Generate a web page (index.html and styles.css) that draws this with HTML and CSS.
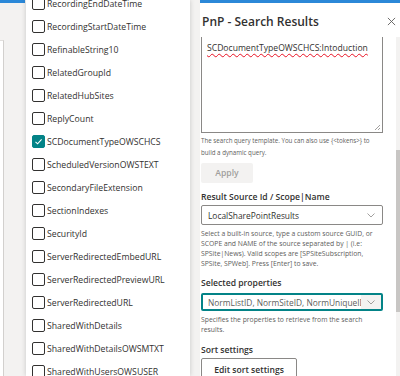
FILE: index.html
```html
<!DOCTYPE html>
<html lang="en">
<head>
    <meta charset="UTF-8">
    <meta name="viewport" content="width=device-width, initial-scale=1.0">
    <title>PnP - Search Results</title>
    <link rel="stylesheet" href="styles.css">
</head>
<body>
    <div class="screen">
        <div class="backdrop-left">
            <div class="top-accent"></div>
            <div class="page-card"></div>
        </div>

        <div class="callout">
            <ul class="options">
                <li class="option"><span class="box"></span>RecordingEndDateTime</li>
                <li class="option"><span class="box"></span>RecordingStartDateTime</li>
                <li class="option"><span class="box"></span>RefinableString10</li>
                <li class="option"><span class="box"></span>RelatedGroupId</li>
                <li class="option"><span class="box"></span>RelatedHubSites</li>
                <li class="option"><span class="box"></span>ReplyCount</li>
                <li class="option">
                    <span class="box checked">
                        <svg viewBox="0 0 13 13" width="13" height="13"><polyline points="3.5,6.8 5.6,8.8 9.6,4.4" fill="none" stroke="#fff" stroke-width="1.1"/></svg>
                    </span>SCDocumentTypeOWSCHCS
                </li>
                <li class="option"><span class="box"></span>ScheduledVersionOWSTEXT</li>
                <li class="option"><span class="box"></span>SecondaryFileExtension</li>
                <li class="option"><span class="box"></span>SectionIndexes</li>
                <li class="option"><span class="box"></span>SecurityId</li>
                <li class="option"><span class="box"></span>ServerRedirectedEmbedURL</li>
                <li class="option"><span class="box"></span>ServerRedirectedPreviewURL</li>
                <li class="option"><span class="box"></span>ServerRedirectedURL</li>
                <li class="option"><span class="box"></span>SharedWithDetails</li>
                <li class="option"><span class="box"></span>SharedWithDetailsOWSMTXT</li>
                <li class="option"><span class="box"></span>SharedWithUsersOWSUSER</li>
            </ul>
        </div>

        <div class="gutter"></div>

        <aside class="panel">
            <div class="panel-head">
                <h2>PnP - Search Results</h2>
                <svg class="close" viewBox="0 0 10 10" width="10" height="10"><path d="M1 1 L9 9 M9 1 L1 9" stroke="#605e5c" stroke-width="1"/></svg>
            </div>

            <div class="panel-scroll">
                <div class="panel-content">
                    <div class="query-box">
                        <span class="query-text">SCDocumentTypeOWSCHCS:Intoduction</span>
                        <svg class="grip" viewBox="0 0 7 7" width="7" height="7"><path d="M6 1 L1 6 M6 4 L4 6" stroke="#8a8886" stroke-width="0.8"/></svg>
                    </div>
                    <p class="help first">The search query template. You can also use {&lt;tokens&gt;} to<br>build a dynamic query.</p>
                    <button class="apply-btn" disabled>Apply</button>

                    <div class="field-label">Result Source Id / Scope|Name</div>
                    <div class="select">
                        <span>LocalSharePointResults</span>
                        <svg viewBox="0 0 8 5" width="8" height="5"><polyline points="0.5,0.5 4,4 7.5,0.5" fill="none" stroke="#8a8886" stroke-width="0.8"/></svg>
                    </div>
                    <p class="help">Select a built-in source, type a custom source GUID, or<br>SCOPE and NAME of the source separated by | (i.e:<br>SPSite|News). Valid scopes are [SPSiteSubscription,<br>SPSite, SPWeb]. Press [Enter] to save.</p>

                    <div class="field-label">Selected properties</div>
                    <div class="combo">
                        <span class="combo-text"><span class="caret"></span>NormListID, NormSiteID, NormUniqueID</span>
                        <span class="combo-btn">
                            <svg viewBox="0 0 8 5" width="8" height="5"><polyline points="0.5,0.5 4,4 7.5,0.5" fill="none" stroke="#8a8886" stroke-width="0.8"/></svg>
                        </span>
                    </div>
                    <p class="help">Specifies the properties to retrieve from the search<br>results.</p>

                    <div class="field-label sort">Sort settings</div>
                    <button class="edit-btn">Edit sort settings</button>
                </div>

                <div class="scrollbar"><div class="thumb"></div></div>
            </div>
        </aside>
    </div>
</body>
</html>
```

FILE: styles.css
```css
* {
    box-sizing: border-box;
}

body {
    margin: 0;
    width: 400px;
    height: 376px;
    overflow: hidden;
    font-family: 'Open Sans', 'Noto Sans', sans-serif;
    color: #323130;
    background-color: #f3f2f1;
}

.screen {
    display: flex;
    height: 376px;
}

.backdrop-left {
    width: 26px;
    display: flex;
    flex-direction: column;
}

.top-accent {
    height: 3px;
    width: 25px;
    background-color: #2b88d8;
}

.page-card {
    width: 4px;
    margin-top: 37px;
    flex: 1;
    background-color: #fff;
    border-top: 1px solid #e1dfdd;
    border-right: 1px solid #d2d0ce;
}

.callout {
    width: 164px;
    background-color: #fff;
    box-shadow: 0 0 5px rgba(0, 0, 0, 0.18);
    overflow: hidden;
    position: relative;
    z-index: 1;
}

.options {
    list-style: none;
    margin: -8px 0 0 0;
    padding: 0;
}

.option {
    display: flex;
    align-items: center;
    height: 23px;
    padding-left: 6px;
    font-size: 8.7px;
    color: #323130;
    white-space: nowrap;
}

.box {
    width: 13px;
    height: 13px;
    border: 1px solid #323130;
    border-radius: 2px;
    margin-right: 2px;
    flex-shrink: 0;
    display: flex;
    align-items: center;
    justify-content: center;
}

.box.checked {
    background-color: #038387;
    border-color: #038387;
}

.box svg {
    display: block;
    margin: -1px;
}

.gutter {
    width: 10px;
}

.panel {
    width: 200px;
    background-color: #fff;
    border-top: 3px solid #2b88d8;
    display: flex;
    flex-direction: column;
}

.panel-head {
    height: 34px;
    padding: 10px 0 0 2px;
    display: flex;
    justify-content: space-between;
}

.panel-head h2 {
    margin: 0;
    font-size: 12px;
    font-weight: 600;
    line-height: 17px;
    color: #323130;
}

.close {
    margin: 4px 4px 0 0;
    width: 9px;
    height: 9px;
}

.panel-scroll {
    flex: 1;
    display: flex;
    overflow: hidden;
}

.panel-content {
    width: 182px;
    margin-left: 1px;
}

.query-box {
    height: 96px;
    border: 1px solid #8a8886;
    border-top: none;
    padding: 4px 5px 1px 5px;
    display: flex;
    flex-direction: column;
}

.query-text {
    font-size: 8.6px;
    line-height: 14px;
    color: #323130;
    text-decoration: underline wavy #e81123;
    text-decoration-thickness: 1px;
    text-underline-offset: 2px;
}

.grip {
    margin-top: auto;
    align-self: flex-end;
    margin-right: -4px;
}

.help {
    margin: 4px 0 0 0;
    font-size: 6.8px;
    line-height: 10px;
    color: #605e5c;
    white-space: nowrap;
}

.help.first {
    margin-top: 2px;
    font-size: 6.2px;
    line-height: 12px;
}

.apply-btn {
    display: block;
    margin-top: 4px;
    width: 52px;
    height: 20px;
    border: none;
    border-radius: 2px;
    background-color: #f3f2f1;
    color: #a19f9d;
    font-family: inherit;
    font-size: 8.6px;
    font-weight: 600;
    padding: 0;
}

.field-label {
    margin-top: 7px;
    font-size: 8.6px;
    font-weight: 600;
    line-height: 14px;
    color: #323130;
}

.field-label.sort {
    margin-top: 8px;
}

.select {
    margin-top: 1px;
    height: 20px;
    border: 1px solid #8a8886;
    border-radius: 2px;
    padding: 0 7px 0 6px;
    display: flex;
    align-items: center;
    justify-content: space-between;
    font-size: 8.4px;
    color: #323130;
}

.combo {
    margin-top: 3px;
    height: 18px;
    border: 2px solid #038387;
    border-radius: 2px;
    display: flex;
    align-items: center;
    overflow: hidden;
}

.combo-text {
    flex: 1;
    padding-left: 4px;
    font-size: 8.4px;
    color: #605e5c;
    white-space: nowrap;
    overflow: hidden;
    display: flex;
    align-items: center;
}

.caret {
    width: 1px;
    height: 11px;
    background-color: #323130;
    margin-right: 1px;
}

.combo-btn {
    width: 20px;
    height: 100%;
    background-color: #f3f2f1;
    display: flex;
    align-items: center;
    justify-content: center;
}

.edit-btn {
    display: block;
    margin-top: 1px;
    width: 96px;
    height: 24px;
    border: 1px solid #8a8886;
    border-radius: 2px;
    background-color: #fff;
    color: #323130;
    font-family: inherit;
    font-size: 8.6px;
    font-weight: 600;
    padding: 0;
}

.scrollbar {
    margin-left: auto;
    width: 4px;
    background-color: #f3f2f1;
    padding-top: 113px;
}

.thumb {
    height: 162px;
    background-color: #c8c6c4;
}
```
